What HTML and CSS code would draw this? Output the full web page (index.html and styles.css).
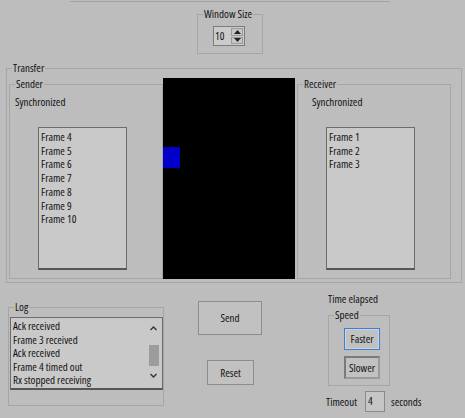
FILE: index.html
```html
<!DOCTYPE html>
<html>
<head>
<meta charset="utf-8">
<link rel="stylesheet" href="styles.css">
</head>
<body>
<div class="app">
  <div class="topline"></div>
  <div class="group ws-group">
    <span class="glabel">Window Size</span>
    <div class="spin">
      <span class="spin-val">10</span>
      <div class="spin-btns">
        <span class="spin-btn"><svg width="7" height="4" viewBox="0 0 7 4"><path d="M3.5 0 L7 4 L0 4 Z" fill="#222"/></svg></span>
        <span class="spin-btn"><svg width="7" height="4" viewBox="0 0 7 4"><path d="M0 0 L7 0 L3.5 4 Z" fill="#222"/></svg></span>
      </div>
    </div>
  </div>

  <div class="group transfer">
    <span class="glabel">Transfer</span>
    <div class="group side sender">
      <span class="glabel">Sender</span>
      <div class="status">Synchronized</div>
      <div class="listbox frames">
        <div>Frame 4</div>
        <div>Frame 5</div>
        <div>Frame 6</div>
        <div>Frame 7</div>
        <div>Frame 8</div>
        <div>Frame 9</div>
        <div>Frame 10</div>
      </div>
    </div>
    <div class="canvas"><div class="packet"></div></div>
    <div class="group side receiver">
      <span class="glabel">Receiver</span>
      <div class="status">Synchronized</div>
      <div class="listbox frames">
        <div>Frame 1</div>
        <div>Frame 2</div>
        <div>Frame 3</div>
      </div>
    </div>
  </div>

  <div class="bottom">
    <div class="group log">
      <span class="glabel">Log</span>
      <div class="listbox loglist">
        <div class="loglines">
          <div>Ack received</div>
          <div>Frame 3 received</div>
          <div>Ack received</div>
          <div>Frame 4 timed out</div>
          <div>Rx stopped receiving</div>
        </div>
        <div class="scrollbar">
          <svg class="arrow" width="7" height="5" viewBox="0 0 7 5"><path d="M0.5 4 L3.5 1 L6.5 4" fill="none" stroke="#333" stroke-width="1.4"/></svg>
          <div class="thumb"></div>
          <svg class="arrow" width="7" height="5" viewBox="0 0 7 5"><path d="M0.5 1 L3.5 4 L6.5 1" fill="none" stroke="#333" stroke-width="1.4"/></svg>
        </div>
      </div>
    </div>

    <div class="actions">
      <div class="btn send">Send</div>
      <div class="btn reset">Reset</div>
    </div>

    <div class="timing">
      <div class="elapsed">Time elapsed</div>
      <div class="group speed">
        <span class="glabel">Speed</span>
        <div class="btn faster">Faster</div>
        <div class="btn slower">Slower</div>
      </div>
      <div class="timeout">
        <span>Timeout</span>
        <span class="tbox">4</span>
        <span class="secs">seconds</span>
      </div>
    </div>
  </div>
</div>
</body>
</html>
```

FILE: styles.css
```css
* { box-sizing: border-box; }

html, body {
  margin: 0;
  padding: 0;
  background: #bdbdbd;
}

body {
  font-family: "Open Sans", "Liberation Sans", sans-serif;
  font-stretch: 75%;
  font-size: 11px;
  color: #121212;
  line-height: 13px;
}

.app {
  width: 465px;
  height: 418px;
  overflow: hidden;
}

.topline {
  margin: 1px 0 0 70px;
  width: 320px;
  height: 1px;
  background: #a2a2a2;
}

.group {
  position: relative;
  border: 1px solid #a6a6a6;
}

.glabel {
  position: absolute;
  top: -8px;
  left: 5px;
  padding: 0 1px;
  background: #bdbdbd;
  line-height: 13px;
  white-space: nowrap;
}

/* Window size */
.ws-group {
  margin: 12px 0 0 197px;
  width: 66px;
  height: 40px;
}
.ws-group .glabel { left: 5px; }

.spin {
  margin: 11px 0 0 15px;
  width: 32px;
  height: 20px;
  border: 1px solid #7c7c7c;
  background: #cbcbcb;
  display: flex;
  align-items: center;
}
.spin-val {
  flex: 1;
  padding-left: 1px;
  margin-top: -1px;
}
.spin-btns {
  width: 13px;
  height: 18px;
  display: flex;
  flex-direction: column;
  gap: 1px;
  padding: 1px 1px 1px 0;
}
.spin-btn {
  flex: 1;
  display: flex;
  align-items: center;
  justify-content: center;
  background: #c6c6c6;
  border: 1px solid #9a9a9a;
}

/* Transfer */
.transfer {
  margin: 14px 0 0 6px;
  width: 456px;
  height: 215px;
  display: flex;
  align-items: flex-start;
  padding-left: 2px;
}
.transfer > .glabel { left: 5px; }

.side {
  margin-top: 15px;
  width: 154px;
  height: 195px;
}
.receiver { margin-left: 2px; }

.status {
  margin-top: 10px;
  padding-left: 5px;
  line-height: 13px;
}
.receiver .status { padding-left: 14px; }

.listbox {
  background: #c9c9c9;
  border: 1px solid #6c6c6e;
  border-bottom: 2px solid #55575c;
}

.frames {
  margin: 19px 0 0 28px;
  width: 89px;
  height: 143px;
  padding: 2px 0 0 2px;
  line-height: 13.7px;
}

.canvas {
  margin-top: 9px;
  width: 132px;
  height: 201px;
  background: #000;
  position: relative;
  z-index: 1;
}
.packet {
  margin-top: 69px;
  width: 17px;
  height: 21px;
  background: #0000c8;
}

/* Bottom */
.bottom {
  display: flex;
  align-items: flex-start;
  padding-left: 8px;
}

.log {
  margin-top: 24px;
  width: 156px;
  height: 99px;
}
.log .glabel { left: 5px; }

.loglist {
  margin: 9px 0 0 1px;
  width: 153px;
  height: 73px;
  display: flex;
}
.loglines {
  flex: 1;
  padding: 1px 0 0 2px;
  line-height: 13.5px;
  white-space: nowrap;
  overflow: hidden;
}
.scrollbar {
  width: 13px;
  margin: 1px 2px 1px 0;
  display: flex;
  flex-direction: column;
  align-items: center;
}
.scrollbar .arrow { margin-top: 7px; }
.scrollbar .thumb {
  margin-top: 14px;
  width: 10px;
  height: 21px;
  background: #9c9c9c;
}
.scrollbar .arrow:last-child { margin-top: 7px; }

.actions {
  margin-left: 34px;
  width: 64px;
  display: flex;
  flex-direction: column;
}

.btn {
  display: flex;
  align-items: center;
  justify-content: center;
  background: #c1c1c1;
  border: 1px solid #8d8d8d;
  padding-bottom: 1px;
}
.send {
  margin-top: 18px;
  width: 64px;
  height: 34px;
}
.reset {
  margin: 25px 0 0 9px;
  width: 47px;
  height: 25px;
}

.timing {
  margin-left: 64px;
  display: flex;
  flex-direction: column;
}
.elapsed {
  margin: 9px 0 0 2px;
  line-height: 13px;
}
.speed {
  margin: 10px 0 0 2px;
  width: 62px;
  height: 71px;
}
.speed .glabel { left: 5px; }
.faster {
  margin: 12px 0 0 15px;
  width: 36px;
  height: 22px;
  border: 1px solid #3d80d2;
  box-shadow: inset 0 0 0 1px #c9d4e2;
}
.slower {
  margin: 6px 0 0 15px;
  width: 36px;
  height: 23px;
  border: 2px solid #7a7a7a;
  border-right-color: #9a9a9a;
  border-bottom-color: #9a9a9a;
}

.timeout {
  margin-top: 5px;
  display: flex;
  align-items: center;
}
.timeout > span:first-child { margin-top: -1px; }
.tbox {
  margin-left: 8px;
  width: 20px;
  height: 21px;
  border: 1px solid #8a8a8a;
  background: #c6c6c6;
  padding: 2px 0 0 2px;
}
.secs { margin-left: 6px; margin-top: -1px; }
```
